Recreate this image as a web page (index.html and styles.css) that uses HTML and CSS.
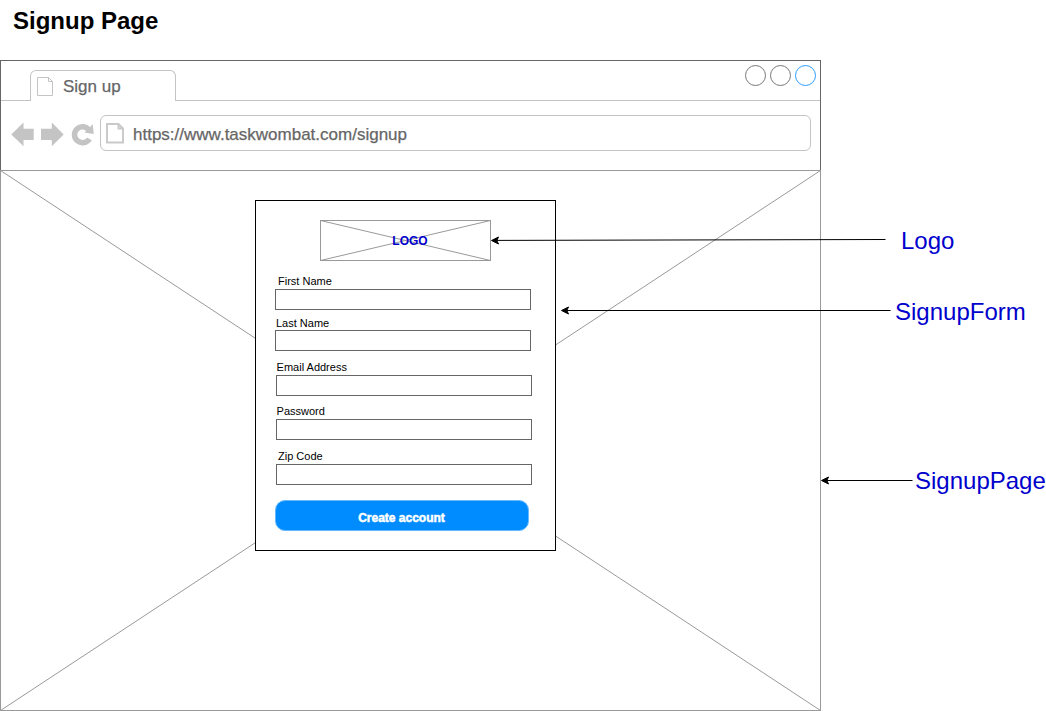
FILE: index.html
```html
<!DOCTYPE html>
<html lang="en">
<head>
<meta charset="utf-8">
<title>Signup Page</title>
<link rel="stylesheet" href="styles.css">
</head>
<body>
<h1 class="title">Signup Page</h1>
<main class="browser">
  <header class="chrome">
    <div class="tabs">
      <div class="tab">
        <svg class="tab-icon" width="17" height="20" viewBox="0 0 17 20"><path d="M.5.5h11l4 4v14H.5zM11.500.5v4h4" fill="none" stroke="#c4c4c4"/></svg>
        <span>Sign up</span>
      </div>
      <div class="tab-rest">
        <svg width="72" height="22" viewBox="0 0 72 22" fill="none" stroke="#777"><circle cx="10.500" cy="10.500" r="10"/><circle cx="35.500" cy="10.500" r="10"/><circle cx="60.500" cy="10.500" r="10" stroke="#2b9dff"/></svg>
      </div>
    </div>
    <div class="toolbar">
      <svg class="nav" width="84" height="26" viewBox="0 0 84 26" fill="#c4c4c4">
        <path d="M.3 13.500 12.500 1.500v6.300h10.200v11.200H12.500v6.300z"/>
        <path d="M52.700 13.500 40.800 1.500v6.300H30v11.200h10.800v6.300z"/>
        <path d="M78.400 17.800A8 8 0 1 1 78 9" fill="none" stroke="#c4c4c4" stroke-width="5.500"/>
        <path d="M73.500 11.600 78 7.500 81.600 3 82.800 13z"/>
      </svg>
      <div class="address">
        <svg class="page-icon" width="18" height="21" viewBox="0 0 18 21"><path d="M1 1h11.500l4.500 4.500v14H1zM12.500 1v4.500h4.500" fill="none" stroke="#c9c9c9" stroke-width="1.900"/></svg>
        <span class="url">https://www.taskwombat.com/signup</span>
      </div>
    </div>
  </header>
  <section class="viewport">
    <svg class="cross" width="821" height="541" viewBox="0 0 821 541"><path d="M.5.5l820 540M820.5.5l-820 540" stroke="#999"/></svg>
    <form class="form">
      <div class="logo">
        <svg class="cross" width="171" height="41" viewBox="0 0 171 41"><path d="M.5.5l170 40M170.500.5l-170 40" stroke="#999"/></svg>
        <span class="logo-text">LOGO</span>
      </div>
      <div class="field first"><label for="f1">First Name</label><input id="f1"></div>
      <div class="field last"><label for="f2">Last Name</label><input id="f2"></div>
      <div class="field email"><label for="f3">Email Address</label><input id="f3"></div>
      <div class="field password"><label for="f4">Password</label><input id="f4" type="password"></div>
      <div class="field zip"><label for="f5">Zip Code</label><input id="f5"></div>
      <button class="submit" type="button">Create account</button>
    </form>
  </section>
</main>
<svg class="notes" width="1046" height="711" viewBox="0 0 1046 711">
  <g fill="none" stroke="#000"><path d="M497 240.400 885.500 239.500M567 310.500H890.500M827 480.500H912.500"/></g>
  <path d="M491.500 240.500l7-3.500-1.700 3.500 1.700 3.500zM561.500 310.500l7-3.500-1.700 3.500 1.700 3.500zM821.500 480.500l7-3.500-1.700 3.500 1.700 3.500z" stroke="#000"/>
  <g class="note-text"><text x="901" y="249">Logo</text><text x="895" y="320">SignupForm</text><text x="915" y="489">SignupPage</text></g>
</svg>
</body>
</html>
```

FILE: styles.css
```css
* { box-sizing: border-box; }
body {
  margin: 0;
  width: 1046px;
  height: 711px;
  overflow: hidden;
  background: #fff;
  font-family: "Liberation Sans", Arial, sans-serif;
}
svg { display: block; flex: none; }
.title {
  margin: 0;
  height: 60px;
  padding: 7px 0 0 13px;
  font-size: 24px;
  line-height: 28px;
}
.browser { width: 821px; }
.chrome {
  height: 110px;
  border: 1px solid #666;
  border-bottom: 0;
  color: #666;
  font-size: 17px;
}
.tabs {
  display: flex;
  height: 40px;
  padding-top: 9px;
}
.tabs::before {
  content: "";
  width: 29px;
  border-bottom: 1px solid #c4c4c4;
}
.tab {
  display: flex;
  align-items: center;
  gap: 9px;
  width: 146px;
  padding: 2px 0 0 6px;
  border: 1px solid #c4c4c4;
  border-bottom: 0;
  border-radius: 6px 6px 0 0;
  -webkit-text-stroke: 0.25px #666;
}
.tab-rest {
  flex: 1;
  display: flex;
  justify-content: flex-end;
  border-bottom: 1px solid #c4c4c4;
}
.tab-rest svg { margin: -5px 3px 0 0; }
.toolbar {
  display: flex;
  padding: 14px 9px 0 10px;
}
.nav { margin: 6px 5px 0 0; }
.address {
  flex: 1;
  display: flex;
  align-items: center;
  gap: 9px;
  height: 36px;
  padding: 2px 0 0 5px;
  border: 1px solid #c4c4c4;
  border-radius: 6px;
  -webkit-text-stroke: 0.25px #666;
}
.page-icon { margin-top: -1px; }
.url { padding-top: 2px; }
.viewport {
  position: relative;
  display: flex;
  justify-content: center;
  align-items: flex-start;
  height: 541px;
  padding: 29px 10px 0 0;
  border: 1px solid #999;
}
.cross { position: absolute; top: -1px; left: -1px; }
.form {
  position: relative;
  width: 301px;
  height: 351px;
  padding: 19px 0 0 19px;
  border: 1px solid #000;
  background: #fff;
}
.logo {
  position: relative;
  display: grid;
  place-items: center;
  width: 171px;
  height: 41px;
  margin: 0 0 14px 45px;
  border: 1px solid #999;
  color: #00c;
  font-size: 12px;
  font-weight: bold;
}
.logo-text { position: relative; padding: 1px 0 0 9px; }
.field label {
  display: block;
  height: 14px;
  padding-left: 0.6px;
  font-size: 11px;
  line-height: 13px;
}
.field input {
  display: block;
  width: 256px;
  height: 21px;
  padding: 0 4px;
  border: 1px solid #666;
  background: #fff;
}
.first label { padding-left: 3px; }
.last { padding-top: 7px; }
.last label { height: 13px; padding-left: 1px; }
.email { padding: 10px 0 0 1px; }
.password { padding: 9px 0 0 1px; }
.zip { padding: 10px 0 0 1px; }
.zip label { padding-left: 2px; }
.submit {
  display: block;
  width: 254px;
  height: 31px;
  margin-top: 15px;
  padding: 4px 1px 0 0;
  border: 1px solid #66b8ff;
  border-radius: 10px;
  background: #008cff;
  color: #fff;
  font: bold 12px "Liberation Sans", Arial, sans-serif;
  -webkit-text-stroke: 0.5px #fff;
}
.notes {
  position: absolute;
  top: 0;
  left: 0;
  pointer-events: none;
}
.note-text { fill: #00c; font-size: 24px; }
```
